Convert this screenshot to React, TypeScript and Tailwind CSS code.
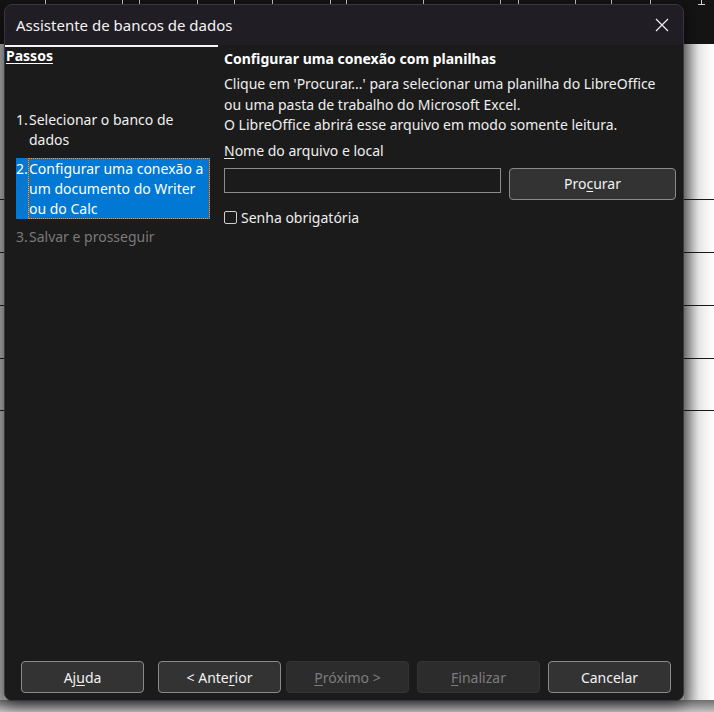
const font = { fontFamily: '"Noto Sans", "Open Sans", sans-serif' };

const ticks = [
  { x: 45, big: true }, { x: 122 }, { x: 139, big: true }, { x: 197 }, { x: 234, big: true },
  { x: 272 }, { x: 330, big: true }, { x: 346 }, { x: 423, big: true }, { x: 500 },
  { x: 518, big: true }, { x: 575 }, { x: 611, big: true }, { x: 650 }, { x: 701, big: true },
];

function U({ children }: { children: string }) {
  return <span className="underline underline-offset-2">{children}</span>;
}

function Btn({ children, disabled, wide }: { children: React.ReactNode; disabled?: boolean; wide?: boolean }) {
  const size = wide ? "w-[167px]" : "w-[123px]";
  return (
    <button
      className={
        disabled
          ? `h-[32px] ${size} shrink-0 rounded-[4px] border border-[#343434] bg-[#2c2c2c] text-[14px] text-[#7d7d7d]`
          : `h-[32px] ${size} shrink-0 rounded-[4px] border border-[#8a8a8a] bg-[#333333] text-[14px] text-[#f2f2f2]`
      }
    >
      {children}
    </button>
  );
}

export default function App() {
  return (
    <div className="relative h-[712px] w-[714px] overflow-hidden bg-[#bdbdbd]" style={font}>
      {/* desktop behind the dialog */}
      <div className="absolute left-0 top-0 h-[44px] w-full bg-[#141414]">
        {ticks.map((t) => (
          <div key={t.x} className="absolute top-0 h-[5px] w-px bg-[#cfcfcf]" style={{ left: t.x }}>
            {t.big && <div className="absolute left-[-3px] top-[4px] h-px w-[7px] bg-[#cfcfcf]" />}
          </div>
        ))}
      </div>
      <div className="absolute left-[684px] top-[44px] h-[668px] w-[30px] bg-gradient-to-r from-[#9a9a9a] via-[#e8e8e8] to-white" />
      <div className="absolute left-0 top-[44px] h-[668px] w-[4px] bg-[#a9a9a9]" />
      {[199, 252, 305, 358, 410].map((y) => (
        <div key={y} className="absolute left-0 h-px w-full bg-[#1a1a1a]" style={{ top: y }} />
      ))}
      <div className="absolute left-0 top-[700px] h-[12px] w-full bg-gradient-to-b from-[#6f6f6f] to-[#c4c4c4]" />

      {/* dialog */}
      <div className="absolute left-[4px] top-[4px] flex h-[697px] w-[680px] flex-col overflow-hidden rounded-[8px] border border-[#3a3640] bg-[#1b1b1b] shadow-[0_4px_16px_rgba(0,0,0,0.6)]">
        <div className="flex h-[40px] shrink-0 items-center justify-between bg-[#211d25] pl-[11px] pr-[14px]">
          <span className="text-[15px] text-[#f3f3f3]">Assistente de bancos de dados</span>
          <svg width="14" height="14" viewBox="0 0 14 14" className="text-[#f0f0f0]">
            <path d="M1 1L13 13M13 1L1 13" stroke="currentColor" strokeWidth="1.2" />
          </svg>
        </div>

        <div className="flex flex-1">
          <div className="w-[213px] shrink-0 border-t-2 border-[#f5f5f5]">
            <div className="pl-[1px] text-[14px] font-bold leading-[18px] text-white">
              <span className="underline underline-offset-2">Passos</span>
            </div>
            <div className="mt-[45px] flex flex-col pl-[11px] pr-[8px] text-[14px] leading-[20px]">
              <div className="flex text-[#f0f0f0]">
                <span className="w-[13px] shrink-0">1.</span>
                <span>Selecionar o banco de dados</span>
              </div>
              <div className="mt-[8px] flex h-[61px] bg-[#0078d4] text-white">
                <span className="w-[12px] shrink-0 pt-[1px]">2.</span>
                <span className="flex-1 border border-dotted border-[#f59a3a] leading-[20px]">
                  Configurar uma conexão a um documento do Writer ou do Calc
                </span>
              </div>
              <div className="mt-[8px] flex text-[#7a7a7a]">
                <span className="w-[13px] shrink-0">3.</span>
                <span>Salvar e prosseguir</span>
              </div>
            </div>
          </div>

          <div className="flex-1 pl-[6px] pr-[7px] pt-[4px] text-[14px] text-[#eeeeee]">
            <div className="font-bold leading-[20px] text-white">Configurar uma conexão com planilhas</div>
            <div className="mt-[5px] leading-[20.5px]">
              Clique em 'Procurar...' para selecionar uma planilha do LibreOffice
              <br />
              ou uma pasta de trabalho do Microsoft Excel.
              <br />O LibreOffice abrirá esse arquivo em modo somente leitura.
            </div>
            <div className="mt-[5px] leading-[20px]">
              <U>N</U>ome do arquivo e local
            </div>
            <div className="mt-[7px] flex items-start gap-[8px]">
              <div className="h-[25px] w-[277px] shrink-0 border border-[#8c8c8c] bg-[#1b1b1b]" />
              <Btn wide>
                Pro<U>c</U>urar
              </Btn>
            </div>
            <div className="mt-[8px] flex items-center gap-[4px] leading-[20px]">
              <span className="h-[13px] w-[13px] rounded-[2px] border border-[#cfcfcf]" />
              <span>
                Senha obri<U>g</U>atória
              </span>
            </div>
          </div>
        </div>

        <div className="flex shrink-0 items-end pb-[7px] pl-[16px]">
          <Btn>
            Aj<U>u</U>da
          </Btn>
          <div className="ml-[14px]">
            <Btn>
              &lt; Ante<U>r</U>ior
            </Btn>
          </div>
          <div className="ml-[5px]">
            <Btn disabled>
              <U>P</U>róximo &gt;
            </Btn>
          </div>
          <div className="ml-[8px]">
            <Btn disabled>
              <U>F</U>inalizar
            </Btn>
          </div>
          <div className="ml-[8px]">
            <Btn>Cancelar</Btn>
          </div>
        </div>
      </div>
    </div>
  );
}
